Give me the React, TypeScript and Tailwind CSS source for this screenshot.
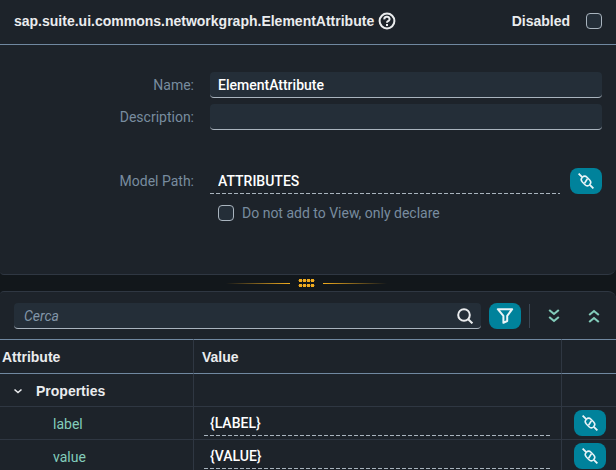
import { useState } from "react";
import type { ReactNode } from "react";

const field =
  "h-[26px] w-full min-w-0 rounded border-b border-[#a9b4be] bg-[#242e38] px-2 font-medium text-white outline-none";

const dashed =
  "h-[26px] w-full min-w-0 bg-transparent bg-[repeating-linear-gradient(90deg,#a9b4be_0px,#a9b4be_4px,transparent_4px,transparent_6px)] bg-[length:100%_1px] bg-bottom bg-no-repeat font-medium text-white outline-none";

const heading = "font-['Liberation_Sans',sans-serif] font-bold text-[#eaecee]";

function BindingIcon() {
  return (
    <svg viewBox="0 0 16 16" className="size-4" fill="none" stroke="#eaf4f7" strokeWidth="1.5" aria-hidden="true">
      <g transform="rotate(45 8 8)">
        <path d="M-2.5 8H2.6M13.4 8H18.5" strokeWidth="1.8" />
        <rect x="2.8" y="4.7" width="10.4" height="6.6" rx="3.3" />
        <path d="M7.4 5.4 8.6 10.6" strokeWidth="1.6" />
      </g>
    </svg>
  );
}

function AccentButton({ label, children }: { label: string; children: ReactNode }) {
  return (
    <button
      type="button"
      aria-label={label}
      className="flex h-[26px] w-8 shrink-0 items-center justify-center rounded-lg bg-[#00829b]"
    >
      {children}
    </button>
  );
}

function CheckBox({ id }: { id: string }) {
  return (
    <input
      id={id}
      type="checkbox"
      className="size-4 shrink-0 appearance-none rounded border border-[#a9b4be] bg-[#242e38] checked:bg-[#00829b]"
    />
  );
}

function Chevrons({ up }: { up?: boolean }) {
  return (
    <svg
      viewBox="0 0 12 14"
      className={up ? "h-[14px] w-3 rotate-180" : "h-[14px] w-3"}
      fill="none"
      stroke="#83cdbb"
      strokeWidth="2.1"
      aria-hidden="true"
    >
      <path d="M1.2 1 6 5 10.8 1M1.2 8 6 12 10.8 8" />
    </svg>
  );
}

function AttributeRow({ name, initial }: { name: string; initial: string }) {
  const [value, setValue] = useState(initial);
  return (
    <tr className="h-[33px]">
      <td className="border-r border-b border-[#2f3742] pt-[2px] pl-[53px] text-[#83cdbb]">
        <label htmlFor={name}>{name}</label>
      </td>
      <td className="border-r border-b border-[#2f3742] px-[10px]">
        <input
          id={name}
          value={value}
          onChange={(e) => setValue(e.target.value)}
          className={`${dashed} block px-[6px]`}
        />
      </td>
      <td className="border-b border-[#2f3742] pl-3">
        <AccentButton label={`Bind ${name}`}>
          <BindingIcon />
        </AccentButton>
      </td>
    </tr>
  );
}

function Header() {
  return (
    <header className={`flex h-[45px] items-center border-b border-[#7088a0] px-[14px] pb-[2px] ${heading}`}>
      <h1>sap.suite.ui.commons.networkgraph.ElementAttribute</h1>
      <button type="button" aria-label="Help" className="ml-1">
        <svg viewBox="0 0 18 18" className="size-[18px]" fill="none" stroke="#eaecee" strokeWidth="2" aria-hidden="true">
          <circle cx="9" cy="9" r="7.4" />
          <path d="M6.4 7.4A2.6 2.3 0 1 1 9.9 9.2Q9 9.6 9 10.8" />
          <path d="M9 12V14" />
        </svg>
      </button>
      <label htmlFor="disabled" className="mr-4 ml-auto">
        Disabled
      </label>
      <CheckBox id="disabled" />
    </header>
  );
}

function Form() {
  const [name, setName] = useState("ElementAttribute");
  const [description, setDescription] = useState("");
  const [path, setPath] = useState("ATTRIBUTES");
  return (
    <form className="grid grid-cols-[194px_1fr] gap-x-4 gap-y-[6px] pt-[27px] pr-[14px] pb-[51px] text-[#788c9f]">
      <label htmlFor="name" className="self-center text-right">
        Name:
      </label>
      <input id="name" value={name} onChange={(e) => setName(e.target.value)} className={field} />
      <label htmlFor="description" className="self-center text-right">
        Description:
      </label>
      <input
        id="description"
        value={description}
        onChange={(e) => setDescription(e.target.value)}
        className={field}
      />
      <label htmlFor="path" className="mt-8 self-center text-right">
        Model Path:
      </label>
      <div className="mt-8 flex gap-[10px]">
        <input id="path" value={path} onChange={(e) => setPath(e.target.value)} className={`${dashed} px-2`} />
        <AccentButton label="Bind model path">
          <BindingIcon />
        </AccentButton>
      </div>
      <div className="col-start-2 mt-[3px] flex items-center gap-2 pl-2">
        <CheckBox id="declare" />
        <label htmlFor="declare">Do not add to View, only declare</label>
      </div>
    </form>
  );
}

function Splitter() {
  return (
    <div role="separator" className="flex h-4 items-center justify-center gap-2 pr-1">
      <span className="h-px w-16 bg-linear-to-r from-transparent to-[#f0ab1e]" />
      <svg viewBox="0 0 17 8" className="h-2 w-[17px]" aria-hidden="true">
        <path d="M0 1.5H17M0 6.5H17" stroke="#6b5424" strokeWidth="1" />
        <path
          d="M1 1.5H4M5 1.5H8M9 1.5H12M13 1.5H16M1 6.5H4M5 6.5H8M9 6.5H12M13 6.5H16"
          stroke="#f0ab1e"
          strokeWidth="3"
        />
      </svg>
      <span className="h-px w-16 bg-linear-to-l from-transparent to-[#f0ab1e]" />
    </div>
  );
}

function Toolbar() {
  const [query, setQuery] = useState("");
  return (
    <div className="flex items-center px-[14px] pt-[11px] pb-[10px]">
      <div className="flex h-[26px] min-w-0 flex-1 items-center rounded border-b border-[#a9b4be] bg-[#242e38] pr-2 pl-[10px]">
        <input
          aria-label="Cerca"
          placeholder="Cerca"
          value={query}
          onChange={(e) => setQuery(e.target.value)}
          className="min-w-0 flex-1 bg-transparent outline-none placeholder:text-[#8396a8] placeholder:italic"
        />
        <button type="button" aria-label="Search">
          <svg viewBox="0 0 16 16" className="size-4" fill="none" stroke="#eaecee" strokeWidth="2" aria-hidden="true">
            <circle cx="7" cy="7" r="5.8" />
            <path d="M11.2 11.2 15.4 15.4" />
          </svg>
        </button>
      </div>
      <div className="ml-2 flex">
        <AccentButton label="Filter">
          <svg viewBox="0 0 18 16" className="h-4 w-[18px]" fill="none" stroke="#eaf4f7" strokeWidth="2" aria-hidden="true">
            <path d="M1.8 1.2H16.2L11.2 7.8V13L7.4 14.8V7.8Z" strokeLinejoin="round" />
          </svg>
        </AccentButton>
      </div>
      <span className="ml-2 h-6 w-px bg-[#3b4653]" />
      <button type="button" aria-label="Expand all" className="ml-2 flex w-8 justify-center">
        <Chevrons />
      </button>
      <button type="button" aria-label="Collapse all" className="-mr-2 ml-2 flex w-8 justify-center">
        <Chevrons up />
      </button>
    </div>
  );
}

function AttributeTable() {
  return (
    <table className="w-full table-fixed border-separate border-spacing-0">
      <colgroup>
        <col className="w-[194px]" />
        <col />
        <col className="w-[54px]" />
      </colgroup>
      <thead>
        <tr className="h-[35px] text-left">
          <th className={`border-y border-r border-y-[#7088a0] border-r-[#2f3742] pl-[2px] ${heading}`}>Attribute</th>
          <th className={`border-y border-r border-y-[#7088a0] border-r-[#2f3742] pl-2 ${heading}`}>Value</th>
          <td className="border-y border-[#7088a0]" />
        </tr>
      </thead>
      <tbody>
        <tr className="h-[33px]">
          <th className={`border-r border-b border-[#2f3742] pt-[2px] pl-3 text-left ${heading}`}>
            <button type="button" aria-expanded="true" className="flex items-center gap-3">
              <svg viewBox="0 0 12 12" className="size-3" fill="none" stroke="#eaecee" strokeWidth="1.6" aria-hidden="true">
                <path d="M2.5 4.5 6 7.5 9.5 4.5" />
              </svg>
              Properties
            </button>
          </th>
          <td className="border-r border-b border-[#2f3742]" />
          <td className="border-b border-[#2f3742]" />
        </tr>
        <AttributeRow name="label" initial="{LABEL}" />
        <AttributeRow name="value" initial="{VALUE}" />
      </tbody>
    </table>
  );
}

export default function App() {
  return (
    <main className="h-screen overflow-hidden bg-[#12171b] font-[Roboto,sans-serif] text-sm leading-5">
      <section className="rounded-br-lg rounded-bl border-b border-[#2f3742] bg-[#1d232a]">
        <Header />
        <Form />
      </section>
      <Splitter />
      <section className="rounded-tl rounded-tr-lg border-t border-[#2f3742] bg-[#1d232a]">
        <Toolbar />
        <AttributeTable />
      </section>
    </main>
  );
}
